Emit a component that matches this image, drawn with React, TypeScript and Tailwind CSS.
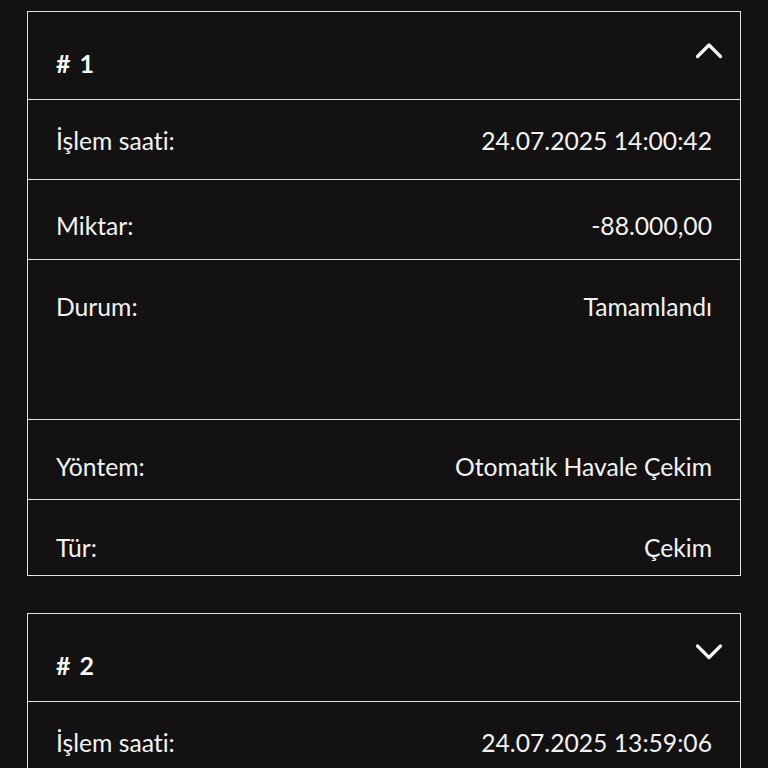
import React from "react";

type Row = { label: string; value: string; h: string; pt: string };

const Chevron = ({ up }: { up: boolean }) => (
  <svg width="28" height="18" viewBox="0 0 28 18" fill="none" className="block">
    {up ? (
      <polyline points="2.5,15.5 14,4 25.5,15.5" stroke="#f7f7f7" strokeWidth="3.2" strokeLinecap="round" strokeLinejoin="round" />
    ) : (
      <polyline points="2.5,3 14,14.5 25.5,3" stroke="#f7f7f7" strokeWidth="3.2" strokeLinecap="round" strokeLinejoin="round" />
    )}
  </svg>
);

const Card = ({ n, up, rows }: { n: number; up: boolean; rows: Row[] }) => (
  <div className="border border-[#e4e4e4] bg-[#131111]">
    <div className="h-[88px] flex justify-between pl-[28px] pr-[17px] border-b border-[#e4e4e4]">
      <div className="pt-[36px] text-[25px] leading-[30px] font-bold text-[#f7f7f7] flex gap-[9px]">
        <span>#</span>
        <span>{n}</span>
      </div>
      <div className="pt-[29px]">
        <Chevron up={up} />
      </div>
    </div>
    {rows.map((r, i) => (
      <div
        key={i}
        className={`flex justify-between pl-[28px] pr-[28px] text-[24.7px] leading-[30px] text-[#f2f2f2] [font-variant-ligatures:none] ${r.h} ${r.pt} ${i < rows.length - 1 ? "border-b border-[#e4e4e4]" : ""}`}
      >
        <span>{r.label}</span>
        <span>{r.value}</span>
      </div>
    ))}
  </div>
);

export default function App() {
  const rows1: Row[] = [
    { label: "İşlem saati:", value: "24.07.2025 14:00:42", h: "h-[80px]", pt: "pt-[26px]" },
    { label: "Miktar:", value: "-88.000,00", h: "h-[80px]", pt: "pt-[31px]" },
    { label: "Durum:", value: "Tamamlandı", h: "h-[160px]", pt: "pt-[32px]" },
    { label: "Yöntem:", value: "Otomatik Havale Çekim", h: "h-[80px]", pt: "pt-[32px]" },
    { label: "Tür:", value: "Çekim", h: "h-[75px]", pt: "pt-[33px]" },
  ];
  const rows2: Row[] = [
    { label: "İşlem saati:", value: "24.07.2025 13:59:06", h: "h-[80px]", pt: "pt-[26px]" },
  ];
  return (
    <div
      className="min-h-screen h-[768px] overflow-hidden bg-[#131111] px-[27px] pt-[11px] flex flex-col gap-[37px]"
      style={{ fontFamily: "Lato, 'Noto Sans', sans-serif" }}
    >
      <Card n={1} up={true} rows={rows1} />
      <Card n={2} up={false} rows={rows2} />
    </div>
  );
}
